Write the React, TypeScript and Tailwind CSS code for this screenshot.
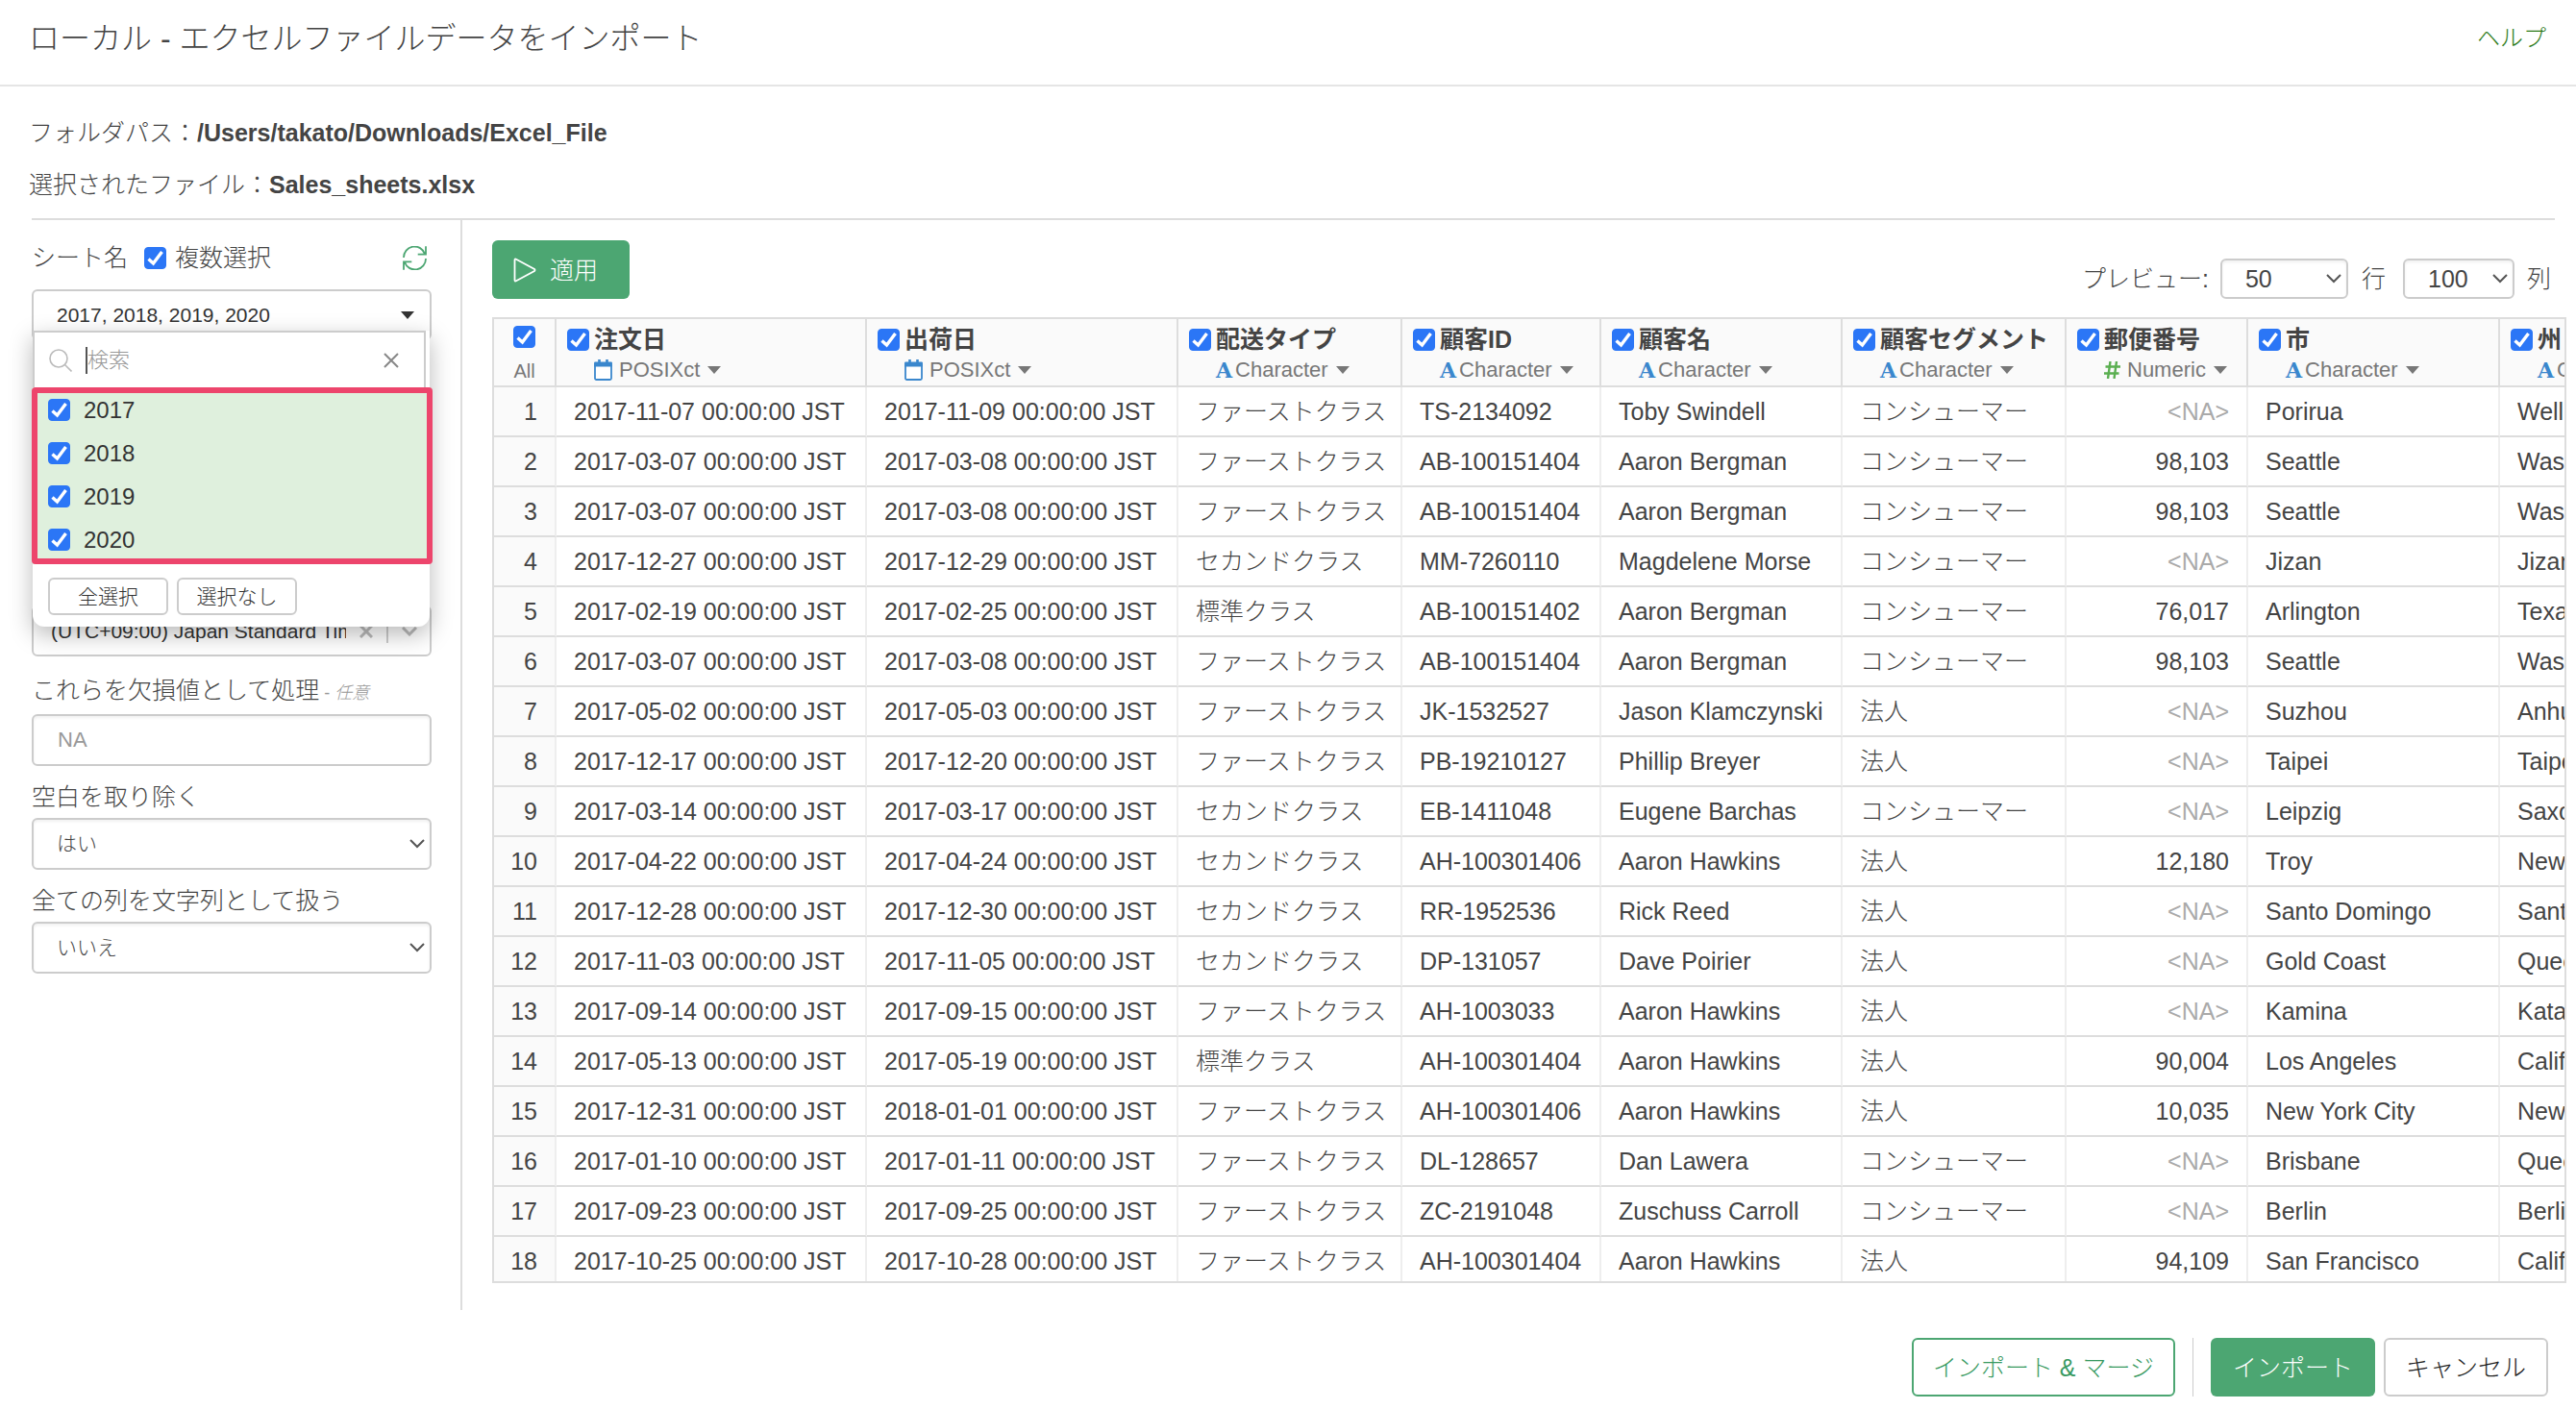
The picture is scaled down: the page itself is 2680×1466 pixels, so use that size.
import { useState } from "react";
import type { InputHTMLAttributes, ReactNode, SelectHTMLAttributes } from "react";
import clsx from "clsx";

type ColumnType = "POSIXct" | "Character" | "Numeric";

interface Column {
  name: string;
  type: ColumnType;
  width: string;
}

const SHEETS = ["2017", "2018", "2019", "2020"];

const COLUMNS: Column[] = [
  { name: "注文日", type: "POSIXct", width: "w-[323px]" },
  { name: "出荷日", type: "POSIXct", width: "w-[324px]" },
  { name: "配送タイプ", type: "Character", width: "w-[233px]" },
  { name: "顧客ID", type: "Character", width: "w-[207px]" },
  { name: "顧客名", type: "Character", width: "w-[251px]" },
  { name: "顧客セグメント", type: "Character", width: "w-[233px]" },
  { name: "郵便番号", type: "Numeric", width: "w-[189px]" },
  { name: "市", type: "Character", width: "w-[262px]" },
  { name: "州", type: "Character", width: "w-[240px]" },
];

const FIRST = "ファーストクラス";
const SECOND = "セカンドクラス";
const STANDARD = "標準クラス";
const CONSUMER = "コンシューマー";
const CORPORATE = "法人";

// order date, ship date, ship mode, customer id, customer, segment, postal code, city, state
const ROWS: (string | null)[][] = [
  ["2017-11-07", "2017-11-09", FIRST, "TS-2134092", "Toby Swindell", CONSUMER, null, "Porirua", "Wellington"],
  ["2017-03-07", "2017-03-08", FIRST, "AB-100151404", "Aaron Bergman", CONSUMER, "98,103", "Seattle", "Washington"],
  ["2017-03-07", "2017-03-08", FIRST, "AB-100151404", "Aaron Bergman", CONSUMER, "98,103", "Seattle", "Washington"],
  ["2017-12-27", "2017-12-29", SECOND, "MM-7260110", "Magdelene Morse", CONSUMER, null, "Jizan", "Jizan"],
  ["2017-02-19", "2017-02-25", STANDARD, "AB-100151402", "Aaron Bergman", CONSUMER, "76,017", "Arlington", "Texas"],
  ["2017-03-07", "2017-03-08", FIRST, "AB-100151404", "Aaron Bergman", CONSUMER, "98,103", "Seattle", "Washington"],
  ["2017-05-02", "2017-05-03", FIRST, "JK-1532527", "Jason Klamczynski", CORPORATE, null, "Suzhou", "Anhui"],
  ["2017-12-17", "2017-12-20", FIRST, "PB-19210127", "Phillip Breyer", CORPORATE, null, "Taipei", "Taipei City"],
  ["2017-03-14", "2017-03-17", SECOND, "EB-1411048", "Eugene Barchas", CONSUMER, null, "Leipzig", "Saxony"],
  ["2017-04-22", "2017-04-24", SECOND, "AH-100301406", "Aaron Hawkins", CORPORATE, "12,180", "Troy", "New York"],
  ["2017-12-28", "2017-12-30", SECOND, "RR-1952536", "Rick Reed", CORPORATE, null, "Santo Domingo", "Santo Domingo"],
  ["2017-11-03", "2017-11-05", SECOND, "DP-131057", "Dave Poirier", CORPORATE, null, "Gold Coast", "Queensland"],
  ["2017-09-14", "2017-09-15", FIRST, "AH-1003033", "Aaron Hawkins", CORPORATE, null, "Kamina", "Katanga"],
  ["2017-05-13", "2017-05-19", STANDARD, "AH-100301404", "Aaron Hawkins", CORPORATE, "90,004", "Los Angeles", "California"],
  ["2017-12-31", "2018-01-01", FIRST, "AH-100301406", "Aaron Hawkins", CORPORATE, "10,035", "New York City", "New York"],
  ["2017-01-10", "2017-01-11", FIRST, "DL-128657", "Dan Lawera", CONSUMER, null, "Brisbane", "Queensland"],
  ["2017-09-23", "2017-09-25", FIRST, "ZC-2191048", "Zuschuss Carroll", CONSUMER, null, "Berlin", "Berlin"],
  ["2017-10-25", "2017-10-28", FIRST, "AH-100301404", "Aaron Hawkins", CORPORATE, "94,109", "San Francisco", "California"],
];

function Checkbox({ className, ...props }: InputHTMLAttributes<HTMLInputElement>) {
  return (
    <span className={clsx("grid size-[23px] shrink-0", className)}>
      <input
        type="checkbox"
        className="col-start-1 row-start-1 size-full appearance-none rounded-[4px] border border-[#bbb] checked:border-[#2b76f6] checked:bg-[#2b76f6] peer"
        {...props}
      />
      <svg viewBox="0 0 23 23" className="col-start-1 row-start-1 size-full pointer-events-none invisible peer-checked:visible">
        <path d="M4.500 12.500 9.500 17 18.500 5" fill="none" stroke="#fff" strokeWidth="3.400" />
      </svg>
    </span>
  );
}

function SelectBox({ className, children, ...props }: SelectHTMLAttributes<HTMLSelectElement> & { children: ReactNode }) {
  return (
    <div className={clsx("relative", className)}>
      <select
        className="size-full appearance-none rounded-md border-2 border-[#ccc] bg-white pl-6 pr-8 shadow-[inset_0_2px_3px_rgba(0,0,0,0.06)]"
        {...props}
      >
        {children}
      </select>
      <svg viewBox="0 0 16 10" className="absolute right-[7px] top-1/2 -translate-y-1/2 w-4 h-2.5 pointer-events-none">
        <path d="M1 1l7 7 7-7" fill="none" stroke="#555" strokeWidth="2" />
      </svg>
    </div>
  );
}

function RefreshIcon() {
  return (
    <svg viewBox="0 0 25 25" className="size-[25px]" fill="none" stroke="#4ca672" strokeWidth="1.8">
      <path d="M1 12A11.3 11.3 0 0 1 23 8.2M24 .3v8.3h-8.3" />
      <path d="M24 13A11.3 11.3 0 0 1 2 16.8M1 24.7v-8.3h8.3" />
    </svg>
  );
}

function TypeIcon({ type }: { type: ColumnType }) {
  if (type === "POSIXct") {
    return (
      <svg viewBox="0 0 19 22" className="w-[19px] h-[22px] mr-[7px]">
        <path d="M5.500 0v4M13.500 0v4" stroke="#3a87cd" strokeWidth="2.600" />
        <rect x="1" y="4" width="17" height="17" rx="1.500" fill="#fff" stroke="#3a87cd" strokeWidth="1.8" />
        <path d="M.100 3.500q0-1 1-1h16.800q1 0 1 1V7.500H.100z" fill="#3a87cd" />
      </svg>
    );
  }
  if (type === "Numeric") {
    return (
      <svg viewBox="0 0 17 18" className="w-[17px] h-[18px] mr-[7px]">
        <path d="M6.5 0 4 18M13 0l-2.500 18M1.500 5.500H17M0 12.500h15.500" fill="none" stroke="#5aaf50" strokeWidth="2.4" />
      </svg>
    );
  }
  return <span className="font-['DejaVu_Serif'] font-bold text-[22px] text-[#3a87cd] mr-[3px]">A</span>;
}

function Caret({ className }: { className: string }) {
  return (
    <svg viewBox="0 0 14 8" className={clsx("w-3.5 h-2", className)}>
      <path d="M0 0h14L7 8z" fill="currentColor" />
    </svg>
  );
}

function SheetPicker() {
  const [selected, setSelected] = useState(SHEETS);
  const [query, setQuery] = useState("");

  const toggle = (sheet: string) => {
    setSelected(prev => SHEETS.filter(s => (s === sheet ? !prev.includes(s) : prev.includes(s))));
  };

  return (
    <div className="text-[21px] text-[#333]">
      <button className="flex w-full h-[53px] items-center justify-between rounded-md border-2 border-[#ccc] pl-6 pr-4">
        {selected.join(", ")}
        <Caret className="text-[#333]" />
      </button>

      <div className="relative z-10 -mt-2.5 ml-px mr-0.5 rounded-b-xl bg-white shadow-[0_8px_24px_rgba(0,0,0,0.28)]">
        <div className="flex h-[59px] mr-1 items-center border-2 border-b-0 border-[#ccc] pl-[15px] pr-[26px]">
          <svg viewBox="0 0 24 24" className="size-6 shrink-0" fill="none" stroke="#bbb" strokeWidth="1.6">
            <circle cx="10" cy="10" r="9" />
            <path d="M16.500 16.500 23.500 23.500" />
          </svg>
          <span className="ml-3.5 w-0.5 h-7 bg-[#555]" />
          <input
            aria-label="検索"
            placeholder="検索"
            value={query}
            onChange={e => setQuery(e.target.value)}
            className="min-w-0 flex-1 outline-none text-[22px] placeholder:text-[#999]"
          />
          <button aria-label="clear" onClick={() => setQuery("")}>
            <svg viewBox="0 0 16 16" className="size-4" stroke="#888" strokeWidth="2">
              <path d="M1 1l14 14M15 1 1 15" />
            </svg>
          </button>
        </div>

        <div className="relative bg-[#dff0dd] pt-px pb-[3px] text-[24px]">
          {SHEETS.filter(s => s.includes(query)).map(sheet => (
            <label key={sheet} className="flex h-[45px] items-center gap-3.5 pl-4">
              <Checkbox checked={selected.includes(sheet)} onChange={() => toggle(sheet)} />
              {sheet}
            </label>
          ))}
          <div className="absolute -left-px -right-[3px] inset-y-0 rounded border-6 border-[#ed456c] pointer-events-none" />
        </div>

        <div className="flex gap-[9px] px-4 pt-3.5 pb-3">
          <button onClick={() => setSelected(SHEETS)} className="w-[125px] h-[39px] rounded-md border-2 border-[#ccc] leading-none">
            全選択
          </button>
          <button onClick={() => setSelected([])} className="w-[125px] h-[39px] rounded-md border-2 border-[#ccc] leading-none">
            選択なし
          </button>
        </div>
      </div>
    </div>
  );
}

function Sidebar() {
  return (
    <aside className="w-[448px] shrink-0 border-r-2 border-[#ddd] pr-[30px] pt-[21px]">
      <div className="flex h-9 mb-[15px] items-center">
        <span>シート名</span>
        <label className="flex items-center ml-[17px] gap-[9px]">
          <Checkbox defaultChecked />
          複数選択
        </label>
        <button aria-label="refresh" className="ml-auto mr-[5px]">
          <RefreshIcon />
        </button>
      </div>

      <SheetPicker />

      <div className="flex -mt-[22px] h-[53px] items-center rounded-md border-2 border-[#ccc] pl-[18px] pr-[13px] text-[21px] text-[#333]">
        <span className="flex-1 overflow-hidden whitespace-nowrap">(UTC+09:00) Japan Standard Time</span>
        <svg viewBox="0 0 14 14" className="size-3.5 ml-3.5" stroke="#bbb" strokeWidth="3">
          <path d="M1 1l12 12M13 1 1 13" />
        </svg>
        <span className="ml-3.5 h-6 w-0.5 bg-[#ccc]" />
        <svg viewBox="0 0 16 10" className="w-4 h-2.5 ml-3.5" fill="none" stroke="#bbb" strokeWidth="3">
          <path d="M1 1l7 7 7-7" />
        </svg>
      </div>

      <label htmlFor="na" className="block mt-[17px] mb-1 leading-9">
        これらを欠損値として処理<span className="text-[18px] text-[#999]"> - <i>任意</i></span>
      </label>
      <input
        id="na"
        placeholder="NA"
        className="block w-full h-[54px] rounded-md border-2 border-[#ccc] px-[25px] text-[22px] shadow-[inset_0_2px_3px_rgba(0,0,0,0.06)] placeholder:text-[#999]"
      />

      <label htmlFor="trim" className="block mt-3.5 mb-1 leading-9">空白を取り除く</label>
      <SelectBox id="trim" className="h-[54px] text-[21px]">
        <option>はい</option>
      </SelectBox>

      <label htmlFor="as-text" className="block mt-3.5 mb-1 leading-9">全ての列を文字列として扱う</label>
      <SelectBox id="as-text" className="h-[54px] text-[21px]">
        <option>いいえ</option>
      </SelectBox>
    </aside>
  );
}

function PreviewTable() {
  return (
    <div className="flex-1 min-h-0 overflow-hidden border-2 border-[#ddd]">
      <table className="table-fixed w-[2327px] border-separate border-spacing-0">
        <thead>
          <tr className="h-[71px] bg-[#fafafa]">
            <th className="w-[65px] border-r-2 border-b-2 border-[#ddd] p-0 pt-[7px] align-top text-center font-light">
              <Checkbox defaultChecked aria-label="All" className="mx-auto" />
              <div className="mt-3 text-[20px] leading-6 text-[#777]">All</div>
            </th>
            {COLUMNS.map(col => (
              <th key={col.name} className={clsx("border-r-2 border-b-2 border-[#ddd] p-0 pt-[9px] pl-[11px] align-top text-left font-light", col.width)}>
                <label className="flex h-6 items-center gap-[5px] font-bold whitespace-nowrap">
                  <Checkbox defaultChecked />
                  {col.name}
                </label>
                <div className="flex h-6 mt-2 pl-7 items-center text-[22px] text-[#777]">
                  <TypeIcon type={col.type} />
                  {col.type}
                  <Caret className="ml-2" />
                </div>
              </th>
            ))}
          </tr>
        </thead>
        <tbody>
          {ROWS.map((row, i) => (
            <tr key={i} className="h-[52px]">
              <td className="border-r-2 border-b-2 border-r-[#eee] border-b-[#ddd] bg-[#fafafa] p-0 pr-[18px] text-right">{i + 1}</td>
              {row.map((value, c) => (
                <td
                  key={c}
                  className={clsx(
                    "border-r-2 border-b-2 border-r-[#eee] border-b-[#ddd] p-0 px-[18px] whitespace-nowrap",
                    COLUMNS[c].type === "Numeric" && "text-right"
                  )}
                >
                  {value === null ? <span className="text-[#aaa]">&lt;NA&gt;</span> : value}
                  {COLUMNS[c].type === "POSIXct" && " 00:00:00 JST"}
                </td>
              ))}
            </tr>
          ))}
        </tbody>
      </table>
    </div>
  );
}

export default function App() {
  return (
    <div className="flex h-screen flex-col bg-white font-['Liberation_Sans','Noto_Sans_CJK_JP',sans-serif] font-light text-[25px] leading-9 text-[#444]">
      <header className="flex h-[90px] shrink-0 items-center justify-between border-b-2 border-[#e5e5e5] pl-[30px] pr-[31px] pb-2">
        <h1 className="text-[32px]">ローカル - エクセルファイルデータをインポート</h1>
        <a href="#help" className="text-[24px] text-[#2c7a17]">ヘルプ</a>
      </header>

      <div className="pl-[30px] pt-[21px] pb-2 leading-[54px]">
        <p>フォルダパス：<b className="font-bold">/Users/takato/Downloads/Excel_File</b></p>
        <p>選択されたファイル：<b className="font-bold">Sales_sheets.xlsx</b></p>
      </div>
      <hr className="ml-[33px] mr-[22px] border-t-2 border-[#ddd]" />

      <main className="flex flex-1 min-h-0 pl-[33px] pr-2.5">
        <Sidebar />
        <section className="flex min-w-0 flex-1 flex-col pl-[31px] pt-[21px] pb-7">
          <div className="flex h-[61px] mb-[19px] items-end justify-between">
            <button className="flex h-[61px] items-center rounded-md bg-[#4ca672] pl-[22px] pr-[33px] text-white">
              <svg viewBox="0 0 24 26" className="w-6 h-[26px] mr-3.5">
                <path d="M1.500 2.500v21q0 1.500 1.500.800L22 14q1-1 0-2L3 1.700Q1.500 1 1.500 2.500z" fill="none" stroke="#fff" strokeWidth="1.800" />
              </svg>
              適用
            </button>
            <div className="flex items-center pr-4">
              <label htmlFor="rows" className="mr-3">プレビュー:</label>
              <SelectBox id="rows" className="w-[133px] h-[42px]">
                <option>50</option>
              </SelectBox>
              <span className="ml-3.5">行</span>
              <SelectBox id="cols" aria-label="列" className="ml-[18px] w-[116px] h-[42px]">
                <option>100</option>
              </SelectBox>
              <span className="ml-[13px]">列</span>
            </div>
          </div>
          <PreviewTable />
        </section>
      </main>

      <footer className="flex h-[103px] shrink-0 justify-end pt-[29px] pb-[13px] pr-[29px]">
        <button className="rounded-md border-2 border-[#4ca672] px-5 text-[#389a61]">インポート &amp; マージ</button>
        <span className="mx-[18px] w-px bg-[#ccc]" />
        <button className="rounded-md bg-[#4ca672] px-[23px] text-white">インポート</button>
        <button className="ml-[9px] rounded-md border-2 border-[#ccc] px-[21px] text-[#222]">キャンセル</button>
      </footer>
    </div>
  );
}
